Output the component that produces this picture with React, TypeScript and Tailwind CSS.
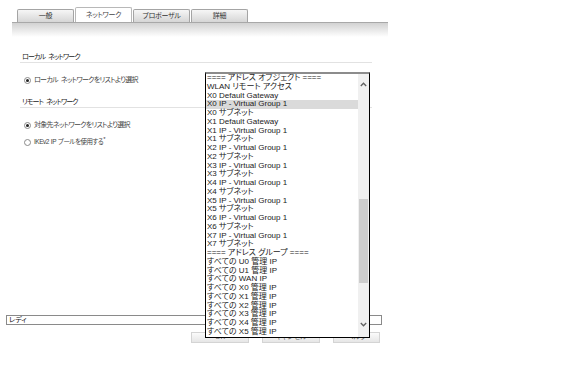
import React from 'react';

const tabs = ['一般', 'ネットワーク', 'プロポーザル', '詳細'];

const items = [
  '==== アドレス オブジェクト ====',
  'WLAN リモート アクセス',
  'X0 Default Gateway',
  'X0 IP - Virtual Group 1',
  'X0 サブネット',
  'X1 Default Gateway',
  'X1 IP - Virtual Group 1',
  'X1 サブネット',
  'X2 IP - Virtual Group 1',
  'X2 サブネット',
  'X3 IP - Virtual Group 1',
  'X3 サブネット',
  'X4 IP - Virtual Group 1',
  'X4 サブネット',
  'X5 IP - Virtual Group 1',
  'X5 サブネット',
  'X6 IP - Virtual Group 1',
  'X6 サブネット',
  'X7 IP - Virtual Group 1',
  'X7 サブネット',
  '==== アドレス グループ ====',
  'すべての U0 管理 IP',
  'すべての U1 管理 IP',
  'すべての WAN IP',
  'すべての X0 管理 IP',
  'すべての X1 管理 IP',
  'すべての X2 管理 IP',
  'すべての X3 管理 IP',
  'すべての X4 管理 IP',
  'すべての X5 管理 IP',
];

const Radio: React.FC<{ checked?: boolean }> = ({ checked }) => (
  <span className="w-[7px] h-[7px] rounded-full border border-[#8a8a8a] bg-white flex items-center justify-center shrink-0">
    {checked && <span className="w-[3px] h-[3px] rounded-full bg-[#222]" />}
  </span>
);

const Chevron: React.FC<{ up?: boolean }> = ({ up }) => (
  <svg width="7" height="5" viewBox="0 0 7 5" className="block">
    <polyline
      points={up ? '0.8,4 3.5,1.2 6.2,4' : '0.8,1 3.5,3.8 6.2,1'}
      fill="none"
      stroke="#606060"
      strokeWidth="1.3"
    />
  </svg>
);

export default function App() {
  return (
    <div className="relative w-[576px] h-[367px] overflow-hidden bg-white text-[#333] text-[8px] font-['Liberation_Sans','Noto_Sans_CJK_JP',sans-serif] [font-feature-settings:'palt']">
      {/* Tabs */}
      <div className="flex items-end gap-px pl-[17px] pt-[7px] h-[22px]">
        {tabs.map((t, i) => (
          <div
            key={t}
            className={`w-[57px] flex items-center justify-center rounded-t-[2px] border border-b-0 text-[7px] tracking-[-0.3px] ${
              i === 1
                ? 'h-[15px] bg-white border-[#b8b8b8] text-[#444]'
                : 'h-[13px] bg-gradient-to-b from-[#f6f6f6] to-[#d6d6d6] border-[#a4a4a4] text-[#333]'
            }`}
          >
            {t}
          </div>
        ))}
      </div>
      <div className="ml-[12px] w-[376px] h-[15px] border-t border-[#a8a8a8] bg-gradient-to-b from-[#d2d2d2] to-white" />

      {/* Content */}
      <div className="ml-[20px] w-[352px]">
        <div className="mt-[15px] h-[11px] leading-[10px] pl-[2px] border-b border-[#e2e2e2] text-[#222] text-[7px] tracking-[-0.9px]">
          ローカル<span className="ml-[3px]">ネットワーク</span>
        </div>
        <div className="mt-[12px] h-[10px] flex items-center gap-[3px] pl-[4px] text-[#444] text-[7px] tracking-[-0.7px]">
          <Radio checked />
          <span>
            ローカル<span className="ml-[3px]">ネットワークをリストより選択</span>
          </span>
        </div>
        <div className="mt-[12px] h-[11px] leading-[10px] pl-[2px] border-b border-[#e2e2e2] text-[#222] text-[7px] tracking-[-0.9px]">
          リモート<span className="ml-[3px]">ネットワーク</span>
        </div>
        <div className="mt-[12px] h-[10px] flex items-center gap-[3px] pl-[4px] text-[#444] text-[7px] tracking-[-0.7px]">
          <Radio checked />
          <span>対象先ネットワークをリストより選択</span>
        </div>
        <div className="mt-[7px] h-[10px] flex items-center gap-[3px] pl-[4px] text-[#444] text-[6.5px] tracking-[-0.5px]">
          <Radio />
          <span>
            IKEv2<span className="ml-[2px]">IP</span>
            <span className="ml-[2px]">プールを使用する</span>
            <sup className="text-[6px]">*</sup>
          </span>
        </div>
      </div>

      {/* Status bar */}
      <div className="mt-[168px] ml-[6px] w-[376px] h-[10px] border border-[#8a8a8a] leading-[8px] pl-[2px] text-[#111] text-[7px]">
        レディ
      </div>

      {/* Buttons */}
      <div className="mt-[7px] ml-[191px] flex gap-[13px]">
        {[
          ['OK', 'w-[58px]'],
          ['キャンセル', 'w-[58px]'],
          ['ヘルプ', 'w-[47px]'],
        ].map(([label, w]) => (
          <div
            key={label}
            className={`${w} h-[11px] flex items-center justify-center border border-[#d4d4d4] bg-gradient-to-b from-[#fbfbfb] to-[#e6e6e6] text-[#666] text-[7px]`}
          >
            {label}
          </div>
        ))}
      </div>

      {/* Open dropdown list */}
      <div className="absolute left-[205px] top-[72px] w-[165px] h-[266px] flex bg-white border border-black border-t-2 border-t-[#8c8c8c] overflow-hidden">
        <div className="flex-1 overflow-hidden">
          {items.map((it, i) => (
            <div
              key={it}
              className={`h-[8.75px] leading-[8.75px] pl-[1px] whitespace-nowrap text-[#222] ${
                i === 3 ? 'bg-[#dadada]' : ''
              }`}
            >
              {it}
            </div>
          ))}
        </div>
        <div className="relative w-[11px] bg-[#f0f0f0]">
          <div className="absolute left-[2px] top-[8px]">
            <Chevron up />
          </div>
          <div className="absolute left-[1px] top-[125px] w-[9px] h-[84px] bg-[#cdcdcd]" />
          <div className="absolute left-[2px] top-[248px]">
            <Chevron />
          </div>
        </div>
      </div>
    </div>
  );
}
